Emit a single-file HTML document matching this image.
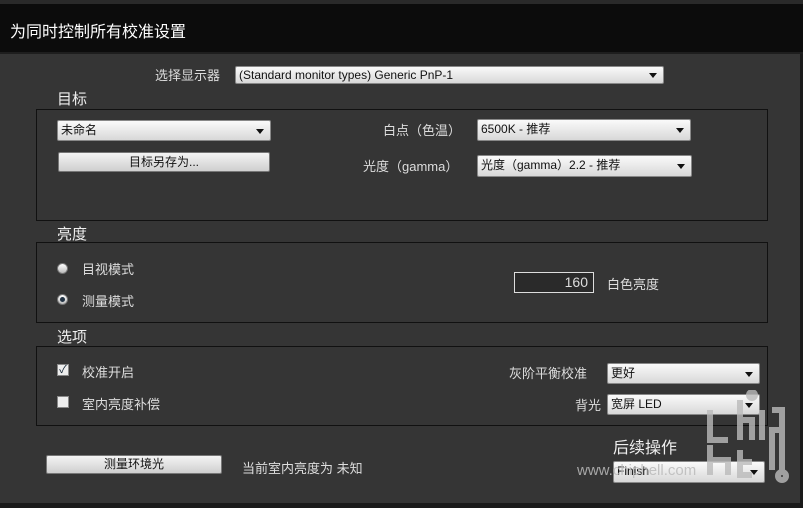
<!DOCTYPE html>
<html><head><meta charset="utf-8"><style>
*{margin:0;padding:0;box-sizing:border-box}
body{width:803px;height:508px;background:#353535;font-family:"Liberation Sans","Noto Sans CJK SC",sans-serif;color:#ddd;position:relative;overflow:hidden;font-size:13px}
.a{position:absolute;white-space:nowrap}
.title{left:0;top:0;width:803px;height:54px;background:#0c0c0c;border-top:4px solid #2a2a2a;border-bottom:2px solid #1e1e1e}
.panel{position:absolute;border:1px solid #111}
.dd{position:absolute;background:linear-gradient(#fafafa,#d8d8d8);border:1px solid #888;border-radius:2px;color:#111;font-size:12px;padding-left:3px;line-height:18px}
.dd:after{content:"";position:absolute;right:6px;top:50%;margin-top:-2px;border-left:4px solid transparent;border-right:4px solid transparent;border-top:5px solid #111}
.btn{position:absolute;background:linear-gradient(#f4f4f4,#cfcfcf);border:1px solid #777;border-radius:2px;color:#111;font-size:12px;text-align:center}
.h{font-size:15px;color:#eee}
.rad{position:absolute;width:11px;height:11px;border-radius:50%;background:linear-gradient(#fff,#bbb);border:1px solid #777}
.cb{position:absolute;width:12px;height:12px;background:#eee;border:1px solid #888;color:#123;font-size:11px;line-height:10px;text-align:center}
</style></head><body>
<div class="a title"></div>
<div class="a" style="left:10px;top:18px;font-size:16px;color:#fff">为同时控制所有校准设置</div>
<div class="a" style="right:0;top:54px;width:3px;height:454px;background:#1a1a1a"></div>
<div class="a" style="left:0;bottom:0;width:803px;height:5px;background:#1a1a1a"></div>

<div class="a" style="left:155px;top:65px">选择显示器</div>
<div class="dd" style="left:235px;top:66px;width:429px;height:18px;line-height:16px">(Standard monitor types) Generic PnP-1</div>

<div class="a h" style="left:57px;top:88px">目标</div>
<div class="panel" style="left:36px;top:109px;width:732px;height:112px"></div>
<div class="dd" style="left:57px;top:120px;width:214px;height:21px">未命名</div>
<div class="btn" style="left:58px;top:152px;width:212px;height:20px;line-height:18px">目标另存为...</div>
<div class="a" style="left:383px;top:120px">白点（色温）</div>
<div class="dd" style="left:477px;top:119px;width:214px;height:22px">6500K - 推荐</div>
<div class="a" style="left:363px;top:156px">光度（gamma）</div>
<div class="dd" style="left:477px;top:155px;width:215px;height:22px">光度（gamma）2.2 - 推荐</div>

<div class="a h" style="left:57px;top:223px">亮度</div>
<div class="panel" style="left:36px;top:242px;width:732px;height:81px"></div>
<div class="rad" style="left:57px;top:263px"></div>
<div class="a" style="left:82px;top:259px">目视模式</div>
<div class="rad" style="left:57px;top:294px"><div style="position:absolute;left:2px;top:2px;width:5px;height:5px;border-radius:50%;background:#234"></div></div>
<div class="a" style="left:82px;top:291px">测量模式</div>
<div class="a" style="left:514px;top:272px;width:80px;height:21px;border:1px solid #ddd;background:#2a2a2a;text-align:right;padding-right:5px;line-height:19px;font-size:14px">160</div>
<div class="a" style="left:607px;top:274px">白色亮度</div>

<div class="a h" style="left:57px;top:326px">选项</div>
<div class="panel" style="left:36px;top:346px;width:732px;height:80px"></div>
<div class="cb" style="left:57px;top:364px">✓</div>
<div class="a" style="left:82px;top:362px">校准开启</div>
<div class="cb" style="left:57px;top:396px"></div>
<div class="a" style="left:82px;top:394px">室内亮度补偿</div>
<div class="a" style="left:509px;top:363px">灰阶平衡校准</div>
<div class="dd" style="left:607px;top:363px;width:153px;height:21px">更好</div>
<div class="a" style="left:575px;top:395px">背光</div>
<div class="dd" style="left:607px;top:394px;width:153px;height:21px">宽屏 LED</div>

<div class="a" style="left:613px;top:434px;font-size:16px;color:#eee">后续操作</div>
<div class="btn" style="left:46px;top:455px;width:176px;height:19px;line-height:17px">测量环境光</div>
<div class="a" style="left:242px;top:458px">当前室内亮度为 未知</div>
<div class="dd" style="left:613px;top:461px;width:152px;height:22px">Finish</div>
<div class="a" style="left:577px;top:462px;color:#bbb;font-size:15px;opacity:.85">www.chiphell.com</div>
<svg class="a" style="left:700px;top:390px" width="90" height="100" viewBox="0 0 90 100"><g fill="none" stroke="#bbb" stroke-width="6" opacity=".8"><path d="M10 20v30h18M40 10v40M40 30h12v20M62 20v30M72 20h10v20h-10v40"/><path d="M10 55v30M10 70h18v15M40 60v25h12M40 72h12M82 40v40"/><circle cx="52" cy="5" r="3"/><circle cx="82" cy="86" r="4"/></g></svg>
</body></html>
